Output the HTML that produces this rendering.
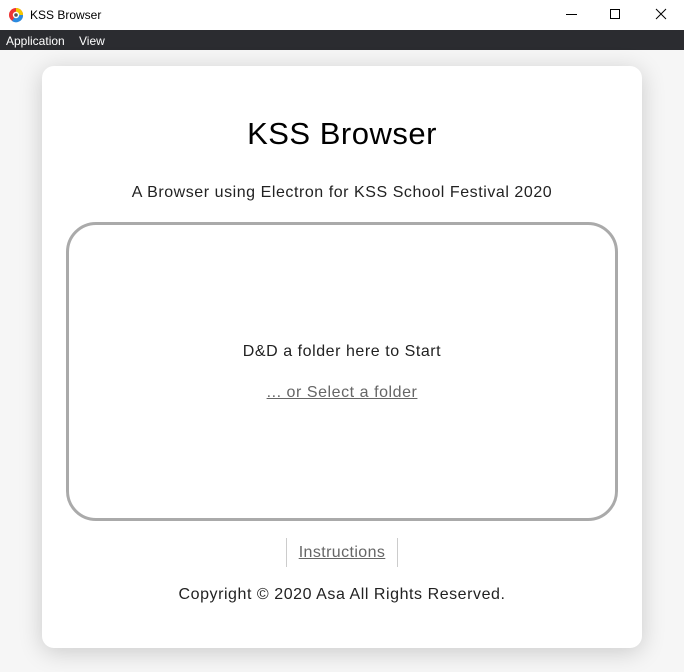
<!DOCTYPE html>
<html><head><style>
*{margin:0;padding:0;box-sizing:border-box}
body{width:684px;height:672px;overflow:hidden;background:#f6f6f6;font-family:"Liberation Sans",sans-serif;position:relative}
.tb{position:absolute;left:0;top:0;width:684px;height:30px;background:#fff}
.tb .t{position:absolute;left:30px;top:8px;font-size:12px;color:#000}
.menu{position:absolute;top:30px;left:0;width:684px;height:20px;background:#2b2c30;color:#fff;font-size:12px}
.menu span{position:absolute;top:4px}
.card{position:absolute;left:42px;top:66px;width:600px;height:582px;background:#fff;border-radius:12px;box-shadow:0 4px 24px rgba(0,0,0,.18);text-align:center;color:#222}
h1{position:absolute;top:50px;width:100%;font-size:31px;font-weight:normal;color:#000;letter-spacing:0.5px}
.sub{position:absolute;top:118px;width:100%;font-size:16px;letter-spacing:0.55px}
.drop{position:absolute;left:24px;top:156px;width:552px;height:299px;border:3px solid #aaa;border-radius:30px}
.d1{position:absolute;top:118px;width:100%;font-size:16px;letter-spacing:0.55px}
.d2{position:absolute;top:159px;width:100%;font-size:16px;letter-spacing:0.55px;color:#666;text-decoration:underline}
.ins{position:absolute;left:244px;top:472px;width:112px;height:29px;border-left:1px solid #ccc;border-right:1px solid #ccc;font-size:16px;letter-spacing:0.4px;color:#666;text-decoration:underline;line-height:29px}
.cp{position:absolute;top:520px;width:100%;font-size:16px;letter-spacing:0.55px}
</style></head><body>
<div class="tb">
<svg style="position:absolute;left:8px;top:7px" width="16" height="16" viewBox="0 0 16 16"><circle cx="8" cy="8" r="7" fill="#e33"/><path d="M8 8 L15 8 A7 7 0 0 1 4 14Z" fill="#2b8be0"/><path d="M8 8 L8 1 A7 7 0 0 1 15 8Z" fill="#f5c800"/><circle cx="8" cy="8" r="3.2" fill="#fff"/><circle cx="8" cy="8" r="1.8" fill="#555"/></svg>
<span class="t">KSS Browser</span>
<div style="position:absolute;left:566px;top:14px;width:11px;height:1px;background:#000"></div>
<div style="position:absolute;left:610px;top:9px;width:10px;height:10px;border:1px solid #000"></div>
<svg style="position:absolute;left:655px;top:8px" width="12" height="12"><path d="M1 1L11 11M11 1L1 11" stroke="#000" stroke-width="1"/></svg>
</div>
<div class="menu"><span style="left:6px">Application</span><span style="left:79px">View</span></div>
<div class="card">
<h1>KSS Browser</h1>
<div class="sub">A Browser using Electron for KSS School Festival 2020</div>
<div class="drop"><div class="d1">D&amp;D a folder here to Start</div><div class="d2">... or Select a folder</div></div>
<div class="ins">Instructions</div>
<div class="cp">Copyright © 2020 Asa All Rights Reserved.</div>
</div>
</body></html>
